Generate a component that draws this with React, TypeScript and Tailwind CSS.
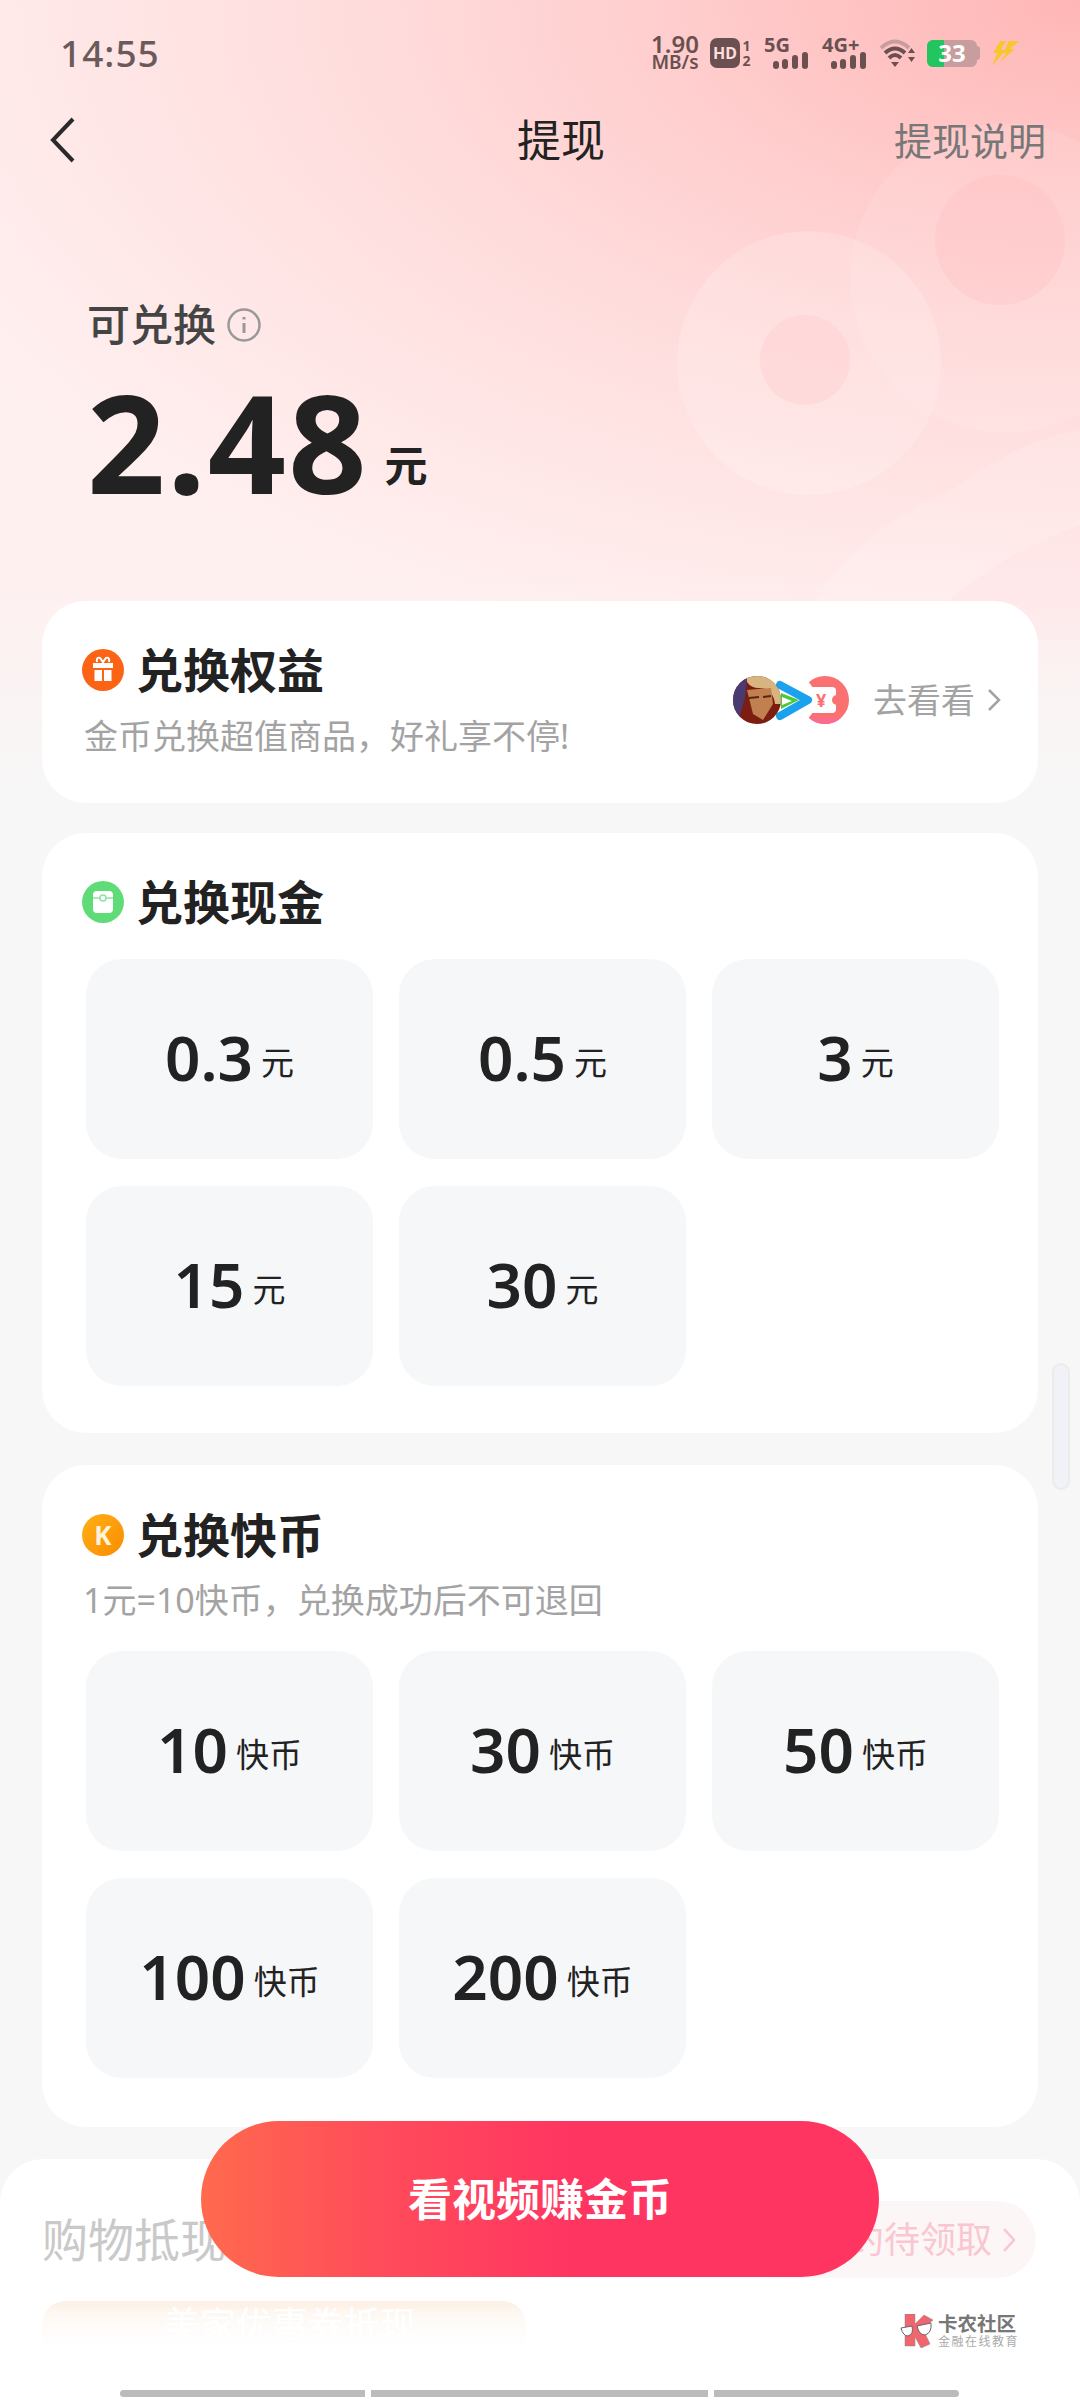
function Wifi() {
  return (
    <svg width="36" height="30" viewBox="0 0 36 30" aria-hidden>
      <path d="M1 10 Q15 -3 29 10" fill="none" stroke="#c79d9d" strokeWidth="4" />
      <path d="M5 15 Q15 6 25 15" fill="none" stroke="#6a5050" strokeWidth="4" />
      <path d="M9 20 Q15 14 21 20" fill="none" stroke="#6a5050" strokeWidth="4" />
      <path d="M11 24 L19 24 L15 29 Z" fill="#6a5050" />
      <path d="M28 15 L35 15 L31.500 10 Z M28 19 L35 19 L31.500 24 Z" fill="#6a5050" />
    </svg>
  )
}

function Bars() {
  return (
    <svg width="35" height="17" viewBox="0 0 35 17" fill="#6a5050" aria-hidden>
      <rect x="0" y="9" width="6" height="8" rx="3" />
      <rect x="9" y="7" width="6" height="10" rx="3" />
      <rect x="19" y="3" width="6" height="14" rx="3" />
      <rect x="29" y="0" width="6" height="17" rx="3" />
    </svg>
  )
}

function NetworkBlock({ label }: { label: string }) {
  return (
    <div className="flex h-[30px] w-[44px] flex-col">
      <span className="h-[14px] text-[20px] font-bold leading-[14px]">{label}</span>
      <div className="flex justify-end"><Bars /></div>
    </div>
  )
}

function StatusBar() {
  return (
    <div className="flex h-[106px] items-center justify-between pl-[60px] pr-[60px]">
      <span className="text-[37px] font-medium tracking-[1px] text-[#6a5a5a]">14:55</span>
      <div className="flex items-center text-[#6a5050]">
        <div className="mr-[10px] flex w-[50px] flex-col items-center font-semibold">
          <span className="text-[24px] leading-[18px]">1.90</span>
          <span className="text-[19px] leading-[18px]">MB/s</span>
        </div>
        <span className="flex h-[30px] w-[30px] items-center justify-center rounded-[7px] bg-[#6a5050] text-[16px] font-bold text-[#fdd]">HD</span>
        <div className="mr-[12px] ml-[1px] flex w-[11px] flex-col items-center text-[14px] font-bold leading-[15px]">
          <span>1</span>
          <span>2</span>
        </div>
        <div className="mr-[14px]"><NetworkBlock label="5G" /></div>
        <div className="mr-[14px]"><NetworkBlock label="4G+" /></div>
        <Wifi />
        <div className="relative ml-[11px] flex h-[27px] w-[50px] rounded-[6px] bg-[#c79d9d]">
          <span className="w-[17px] rounded-l-[6px] bg-[#22c55e]" />
          <span className="absolute inset-0 flex items-center justify-center text-[24px] font-bold text-white">33</span>
        </div>
        <span className="h-[14px] w-[3px] rounded-r bg-[#c79d9d]" />
        <svg className="ml-[10px]" width="30" height="30" viewBox="0 0 30 30" fill="#f7c630" aria-hidden>
          <path d="M10 3 L16 3 L11 12 L16 12 L2 28 L7 15 L3 15 Z" />
          <path d="M19 3 L29 3 L20 11 L25 11 L10 24 L16 15 L13 15 Z" />
        </svg>
      </div>
    </div>
  )
}

function NavBar() {
  return (
    <div className="relative flex h-[68px] items-center justify-between pl-[47px] pr-[34px]">
      <svg width="34" height="48" viewBox="0 0 34 48" fill="none" stroke="#2a2a2a" strokeWidth="4" aria-hidden>
        <path d="M26 3 L6 24 L26 45" />
      </svg>
      <span className="ml-[147px] text-[44px] text-[#222]">提现</span>
      <span className="text-[38px] text-[#777]">提现说明</span>
    </div>
  )
}

function BackgroundArt() {
  return (
    <div className="absolute inset-x-0 top-0 h-[800px] bg-[linear-gradient(to_bottom,transparent_72%,#f7f7f7_100%),radial-gradient(1300px_700px_at_100%_0%,#ffb6b6_0%,#ffcccc_30%,#ffdcdc_55%,#ffe8e8_80%,#fff0f0_100%)]">
      <svg className="absolute inset-0" width="1080" height="800" viewBox="0 0 1080 800" aria-hidden>
        <circle cx="1005" cy="278" r="155" fill="#ffffff" fillOpacity="0.1" />
        <circle cx="809" cy="363" r="132" fill="#ffffff" fillOpacity="0.18" />
        <circle cx="805" cy="360" r="45" fill="#ffc9cc" fillOpacity="0.35" />
        <circle cx="1000" cy="240" r="65" fill="#ffbcc0" fillOpacity="0.3" />
        <path d="M795 640 Q830 545 950 490 Q1020 440 1080 430 L1080 640 Z" fill="#ffffff" fillOpacity="0.14" />
        <path d="M910 640 Q980 560 1080 525 L1080 640 Z" fill="#ffc9cc" fillOpacity="0.1" />
      </svg>
    </div>
  )
}

function Hero() {
  return (
    <div className="h-[427px] pl-[87px] pt-[121px]">
      <div className="flex items-center text-[43px] font-medium leading-[60px] text-[#444]">
        可兑换
        <svg className="ml-[10px]" width="36" height="36" viewBox="0 0 36 36" fill="none" stroke="#999" strokeWidth="2.500" aria-hidden>
          <circle cx="18" cy="18" r="15.500" />
          <path d="M18 16 V26 M18 10 V12.500" strokeWidth="3" />
        </svg>
      </div>
      <div className="mt-[26px] flex items-end text-[#222]">
        <span className="text-[137px] font-bold leading-[120px] tracking-[2px]">2.48</span>
        <span className="mb-[14px] ml-[16px] text-[43px] font-bold leading-none">元</span>
      </div>
    </div>
  )
}

function GiftIcon() {
  return (
    <svg width="42" height="42" viewBox="0 0 42 42" aria-hidden>
      <circle cx="21" cy="21" r="21" fill="#fa6414" />
      <path d="M11 14 H31 V19 H11 Z M12.500 21 H20 V32 H12.500 Z M22 21 H29.500 V32 H22 Z" fill="#fff" />
      <path d="M15 13 Q14 8 18 9 L21 13 L24 9 Q28 8 27 13" fill="none" stroke="#fff" strokeWidth="2" />
    </svg>
  )
}

function WalletIcon() {
  return (
    <svg width="42" height="42" viewBox="0 0 42 42" aria-hidden>
      <circle cx="21" cy="21" r="21" fill="#5fdc78" />
      <rect x="11" y="10" width="20" height="22" rx="4" fill="#fff" />
      <path d="M11 17 H31" stroke="#8fe3a2" strokeWidth="1.500" />
      <circle cx="21" cy="17" r="3" fill="#fff" stroke="#8fe3a2" strokeWidth="1.500" />
    </svg>
  )
}

function CoinIcon() {
  return (
    <div className="flex h-[42px] w-[42px] items-center justify-center rounded-full bg-[linear-gradient(135deg,#ffb017,#fb8c00)] text-[26px] font-bold text-[#fff3dd]">K</div>
  )
}

function SectionTitle({ icon, title }: { icon: React.ReactNode; title: string }) {
  return (
    <div className="flex items-center">
      {icon}
      <span className="ml-[12px] text-[47px] font-bold leading-[64px] text-[#222]">{title}</span>
    </div>
  )
}

function BrandIcons() {
  return (
    <svg width="118" height="52" viewBox="0 0 118 52" aria-hidden>
      <defs>
        <clipPath id="face">
          <circle cx="24" cy="26" r="24" />
        </clipPath>
      </defs>
      <circle cx="92" cy="26" r="24" fill="#fb7070" />
      <path d="M76 44 A24 24 0 0 0 108 44 Z" fill="#fb6a8f" />
      <rect x="76" y="13" width="27" height="26" rx="4" fill="#fff" />
      <circle cx="104" cy="26" r="5" fill="#fb7070" />
      <text x="83" y="33" fontSize="18" fontWeight="700" fill="#fb7070">¥</text>
      <circle cx="58" cy="26" r="25" fill="#fff" />
      <path d="M47 11 L75 26 L47 42" fill="none" stroke="#1ba1ee" strokeWidth="8" strokeLinejoin="round" strokeLinecap="round" />
      <path d="M48 19 L66 26 L48 35 Z" fill="#4fc93c" />
      <path d="M49 23 L59 27 L49 31 Z" fill="#fff" />
      <g clipPath="url(#face)">
        <rect width="48" height="52" y="2" fill="#7c1d12" />
        <path d="M12 0 H50 V30 L42 30 Q40 14 26 14 Q18 14 14 8 Z" fill="#d8b47e" />
        <path d="M0 8 L14 4 L12 24 L6 44 L0 44 Z" fill="#4a3a72" />
        <path d="M14 16 L38 14 L40 30 L30 46 L20 40 Z" fill="#c08050" />
        <path d="M16 24 L26 23 M30 23 L38 22" stroke="#5a2410" strokeWidth="2" />
      </g>
    </svg>
  )
}

function PrivilegeCard() {
  return (
    <section className="flex h-[202px] justify-between rounded-[44px] bg-white pl-[40px] pr-[37px]">
      <div className="pt-[37px]">
        <SectionTitle icon={<GiftIcon />} title="兑换权益" />
        <p className="mt-[9px] ml-[2px] text-[34px] leading-[50px] text-[#a3a3a3]">金币兑换超值商品，好礼享不停!</p>
      </div>
      <div className="-mt-[4px] flex items-center">
        <BrandIcons />
        <span className="ml-[22px] text-[34px] text-[#a3a3a3]">去看看</span>
        <svg className="ml-[12px]" width="14" height="24" viewBox="0 0 14 24" fill="none" stroke="#a3a3a3" strokeWidth="2.500" aria-hidden>
          <path d="M2 2 L12 12 L2 22" />
        </svg>
      </div>
    </section>
  )
}

function Tile({ value, unit }: { value: string; unit: string }) {
  return (
    <div className="flex h-[200px] items-center justify-center rounded-[36px] bg-[#f6f7f9] pb-[4px] text-[#222]">
      <span className="text-[62px] font-semibold leading-none">{value}</span>
      <span className="ml-[8px] mt-[10px] text-[33px] leading-none">{unit}</span>
    </div>
  )
}

function TileGrid({ items, unit }: { items: string[]; unit: string }) {
  return (
    <div className="grid grid-cols-3 gap-x-[26px] gap-y-[27px] pl-[44px] pr-[39px]">
      {items.map((v) => (
        <Tile key={v} value={v} unit={unit} />
      ))}
    </div>
  )
}

function BottomSheet() {
  return (
    <div className="relative mt-[32px] h-[242px] rounded-t-[44px] bg-white pl-[42px] pr-[44px] pt-[42px]">
      <div className="flex h-[77px] items-center justify-between">
        <span className="text-[46px] text-[#c9c9c9]">购物抵现</span>
        <div className="flex h-[77px] w-[300px] items-center justify-end rounded-full bg-[#fdf6f7] pr-[20px] text-[36px] text-[#f9c6d1]">
          约待领取
          <svg className="ml-[10px]" width="14" height="26" viewBox="0 0 14 26" fill="none" stroke="#f9c6d1" strokeWidth="2.500" aria-hidden>
            <path d="M2 2 L12 13 L2 24" />
          </svg>
        </div>
      </div>
      <div className="mt-[23px] h-[48px] w-[484px] rounded-t-[24px] bg-[linear-gradient(to_bottom,#fdf1e6,#ffffff)] pl-[122px] text-[36px] leading-[48px] text-[#fff]">
        美家优惠券抵现
      </div>
      <div className="absolute inset-x-0 bottom-0 h-[92px] bg-[linear-gradient(to_bottom,rgba(255,255,255,0.2),#ffffff_55%)]" />
    </div>
  )
}

function Watermark() {
  return (
    <div className="absolute left-[900px] top-[2313px] flex items-center">
      <svg width="37" height="34" viewBox="0 0 37 34" aria-hidden>
        <path d="M5 0 H15 V10 L24 1 L33 6 L23 15 L30 30 L21 34 L15 23 V32 H5 Z" fill="#f0666f" stroke="#888" strokeWidth="0.5" />
        <path d="M1 14 L12 12 Q14 20 8 22 Q3 22 1 14 Z M17 12 L31 9 Q32 19 25 21 Q19 21 17 12 Z" fill="#fff" stroke="#666" strokeWidth="1" />
      </svg>
      <div className="ml-[1px] flex flex-col">
        <span className="text-[19.500px] font-bold leading-[21px] text-[#777]">卡农社区</span>
        <span className="text-[12px] leading-[15px] tracking-[1.500px] text-[#aaa]">金融在线教育</span>
      </div>
    </div>
  )
}

export default function App() {
  return (
    <div className="relative h-[2400px] w-[1080px] overflow-hidden bg-[#f7f7f7] font-['Noto_Sans','Noto_Sans_CJK_SC',sans-serif]">
      <BackgroundArt />
      <div className="relative">
        <StatusBar />
        <NavBar />
        <Hero />
        <div className="flex flex-col px-[42px]">
          <PrivilegeCard />
          <section className="mt-[30px] h-[600px] rounded-[44px] bg-white pt-[37px]">
            <div className="pl-[40px]">
              <SectionTitle icon={<WalletIcon />} title="兑换现金" />
            </div>
            <div className="mt-[25px]">
              <TileGrid items={['0.3', '0.5', '3', '15', '30']} unit="元" />
            </div>
          </section>
          <section className="mt-[32px] h-[662px] rounded-[44px] bg-white pt-[38px]">
            <div className="pl-[40px]">
              <SectionTitle icon={<CoinIcon />} title="兑换快币" />
            </div>
            <p className="mt-[8px] pl-[41px] text-[34px] leading-[50px] text-[#a3a3a3]">1元=10快币，兑换成功后不可退回</p>
            <div className="mt-[26px]">
              <TileGrid items={['10', '30', '50', '100', '200']} unit="快币" />
            </div>
          </section>
        </div>
        <BottomSheet />
      </div>
      <div className="absolute left-[1052px] top-[1363px] h-[127px] w-[18px] rounded-full border-2 border-[#ececec] bg-[#f1f1f8]" />
      <button
        type="button"
        className="absolute left-[201px] top-[2121px] h-[156px] w-[678px] rounded-full bg-[linear-gradient(90deg,#ff6a4d_0%,#ff4d5a_25%,#ff3561_55%,#ff3561_100%)] text-[44px] font-bold text-white"
      >
        看视频赚金币
      </button>
      <Watermark />
      <div className="absolute left-[120px] top-[2390px] flex gap-[6px]">
        <span className="h-[7px] w-[245px] rounded-l-full bg-[#bbbbbb]" />
        <span className="h-[7px] w-[337px] bg-[#bbbbbb]" />
        <span className="h-[7px] w-[245px] rounded-r-full bg-[#bbbbbb]" />
      </div>
    </div>
  )
}
